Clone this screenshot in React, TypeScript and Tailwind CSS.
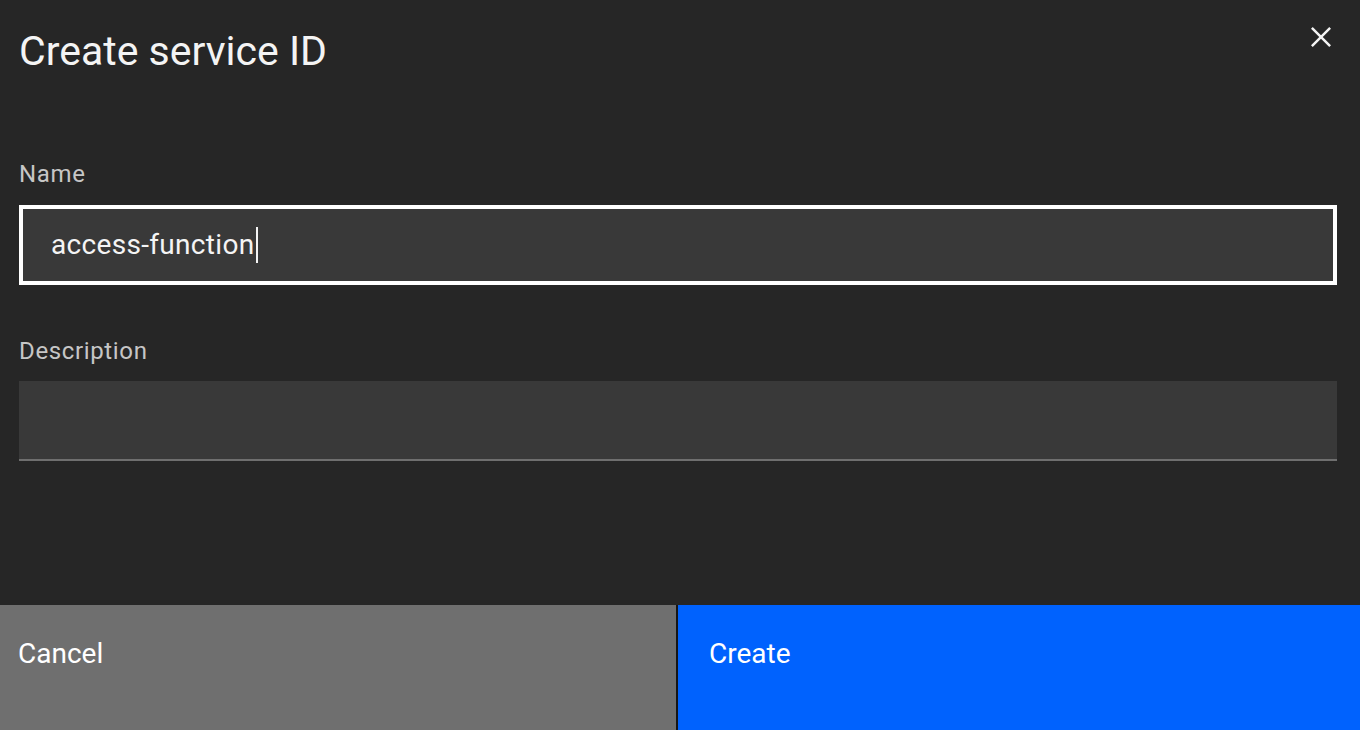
export default function App() {
  return (
    <div className="flex h-[730px] w-[1360px] flex-col bg-[#262626] font-['Roboto',sans-serif] text-[#f4f4f4]">
      {/* Modal body */}
      <div className="relative flex-1">
        <h2 className="ml-[19px] pt-[23px] text-[41px] font-normal leading-[56px]">Create service ID</h2>

        <button className="absolute right-[19px] top-[17px] h-[40px] w-[40px] text-[#f4f4f4]" aria-label="Close">
          <svg viewBox="0 0 32 32" className="h-[40px] w-[40px]" fill="currentColor">
            <path d="M24 9.4L22.6 8 16 14.6 9.4 8 8 9.4 14.6 16 8 22.6 9.4 24 16 17.4 22.6 24 24 22.6 17.4 16 24 9.4z" />
          </svg>
        </button>

        {/* Name field */}
        <label className="ml-[19px] mt-[79px] block text-[24px] leading-[32px] tracking-[0.64px] text-[#c6c6c6]">Name</label>
        <div className="ml-[19px] mt-[15px] flex h-[80px] w-[1318px] items-center border-[4px] border-white bg-[#393939] pl-[28px]">
          <span className="text-[28px] leading-[36px] tracking-[0.32px] text-[#f4f4f4]">access-function</span>
          <span className="ml-[1px] h-[36px] w-[2px] bg-[#f4f4f4]" />
        </div>

        {/* Description field */}
        <label className="ml-[19px] mt-[50px] block text-[24px] leading-[32px] tracking-[0.64px] text-[#c6c6c6]">Description</label>
        <div className="ml-[19px] mt-[14px] h-[80px] w-[1318px] border-b-2 border-[#6f6f6f] bg-[#393939]" />
      </div>

      {/* Footer buttons */}
      <div className="flex h-[125px] gap-[2px] bg-[#161616]">
        <button className="flex w-[676px] items-start bg-[#6f6f6f] pl-[18px] pt-[31px] text-left text-[28px] leading-[36px] text-white">
          Cancel
        </button>
        <button className="flex flex-1 items-start bg-[#0062fe] pl-[31px] pt-[31px] text-left text-[28px] leading-[36px] text-white">
          Create
        </button>
      </div>
    </div>
  )
}
